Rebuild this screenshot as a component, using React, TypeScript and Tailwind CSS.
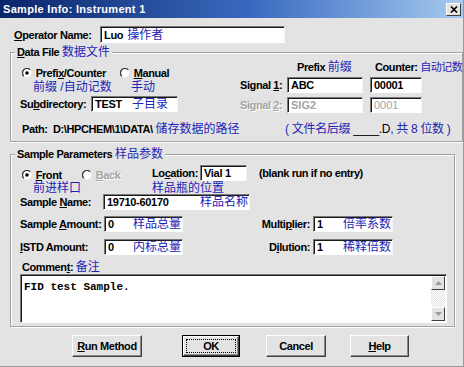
import React from 'react';

// Win2000-style "Sample Info" dialog with Chinese annotations

const lbl = "text-[11px] font-bold tracking-[-0.4px] leading-[12px] text-black whitespace-nowrap";
const dim = "text-[11px] font-bold tracking-[-0.4px] leading-[12px] text-[#a4a4a4] [text-shadow:1px_1px_0_#fff] whitespace-nowrap";
const zh = "text-[12px] leading-[12px] text-[#2424b4] whitespace-nowrap";
const field =
    "bg-white border border-t-[#7a7a7a] border-l-[#7a7a7a] border-b-white border-r-[#f4f4f4] shadow-[inset_1px_1px_0_#1a1a1a] flex items-center pl-[3px] pr-[1px] overflow-hidden";
const val = "text-[11px] font-bold tracking-[-0.3px] leading-[12px] text-black whitespace-nowrap";

const Radio: React.FC<{ checked?: boolean }> = ({ checked }) => (
    <svg width="10" height="10" viewBox="0 0 10 10" className="shrink-0">
        <circle cx="5" cy="5" r="4.4" fill="#fff" />
        <path d="M1.8 8.2 A4.5 4.5 0 0 1 8.2 1.8" stroke="#3a3a3a" strokeWidth="1.3" fill="none" />
        {checked && <circle cx="5" cy="5" r="1.8" fill="#000" />}
    </svg>
);

const U: React.FC<{ children: React.ReactNode }> = ({ children }) => <span className="underline underline-offset-1">{children}</span>;

const Button: React.FC<{ w: string; children: React.ReactNode; focus?: boolean }> = ({ w, children, focus }) => (
    <div className={`${w} h-[22px] ${focus ? 'border border-black' : ''}`}>
        <div className="h-full border border-t-white border-l-white border-b-[#404040] border-r-[#404040] shadow-[inset_-1px_-1px_0_#8a8a8a] flex items-center justify-center p-[2px]">
            <div className={`w-full h-full flex items-center justify-center ${focus ? 'border border-dotted border-black' : ''}`}>
                <span className={lbl}>{children}</span>
            </div>
        </div>
    </div>
);

const Fieldset: React.FC<{ legend: React.ReactNode; className?: string; children: React.ReactNode }> = ({ legend, className, children }) => (
    <fieldset className={`ml-[10px] w-[445px] border border-[#a2a2a2] shadow-[inset_1px_1px_0_#fff,1px_1px_0_#fff] ${className ?? ''}`}>
        <legend className="ml-[4px] px-[2px] bg-[#e3e3e3] leading-[14px] flex items-center">{legend}</legend>
        {children}
    </fieldset>
);

export default function App() {
    return (
        <div className="w-[464px] h-[367px] overflow-hidden bg-[#e3e3e3] font-['Liberation_Sans','Noto_Sans_CJK_SC',sans-serif] border-r border-b border-r-[#9a9a9a] border-b-[#9a9a9a]">
            {/* Title bar */}
            <div className="h-[18px] flex items-center justify-between pl-[3px] pr-[2px] bg-[linear-gradient(to_right,#0a246a,#3a6bc0_55%,#a6caf0)]">
                <span className="text-white text-[11px] font-bold tracking-[0.3px] leading-[12px]">Sample Info: Instrument 1</span>
                <div className="w-[15px] h-[13px] bg-[#e3e3e3] border border-t-white border-l-white border-b-[#404040] border-r-[#404040] flex items-center justify-center">
                    <svg width="8" height="7" viewBox="0 0 8 7">
                        <path d="M1 0.5 L7 6.5 M7 0.5 L1 6.5" stroke="#000" strokeWidth="1.6" />
                    </svg>
                </div>
            </div>

            {/* Operator */}
            <div className="mt-[8px] flex items-center">
                <span className={`${lbl} pl-[14px] w-[100px]`}><U>O</U>perator Name:</span>
                <div className={`${field} w-[185px] h-[17px] gap-[4px]`}>
                    <span className={val}>Luo</span>
                    <span className={zh}>操作者</span>
                </div>
            </div>

            {/* Data File */}
            <Fieldset
                legend={<><span className={lbl}><U>D</U>ata File&nbsp;</span><span className={zh}>数据文件</span></>}
                className="mt-[3px] pb-[5px]"
            >
                <div className="flex items-start">
                    <div className="w-[225px] mt-[9px]">
                        <div className="flex pl-[11px]">
                            <div className="w-[98px] flex flex-col">
                                <div className="flex items-center gap-[1px]">
                                    <Radio checked />
                                    <span className={lbl}>&nbsp;Prefi<U>x</U>/Counter</span>
                                </div>
                                <span className={`${zh} pl-[11px] pt-[2px]`}>前缀 /自动记数</span>
                            </div>
                            <div className="flex flex-col">
                                <div className="flex items-center gap-[1px]">
                                    <Radio />
                                    <span className={lbl}>&nbsp;<U>M</U>anual</span>
                                </div>
                                <span className={`${zh} pl-[11px] pt-[2px]`}>手动</span>
                            </div>
                        </div>
                        <div className="mt-[3px] flex items-center">
                            <span className={`${lbl} pl-[9px] w-[80px]`}>Su<U>b</U>directory:</span>
                            <div className={`${field} w-[87px] h-[16px] gap-[10px]`}>
                                <span className={val}>TEST</span>
                                <span className={zh}>子目录</span>
                            </div>
                        </div>
                    </div>

                    <div className="mt-[2px] flex flex-col">
                        <div className="flex items-center pl-[61px] h-[13px]">
                            <div className="w-[78px] flex items-center">
                                <span className={lbl}>Prefix&nbsp;</span>
                                <span className={zh}>前缀</span>
                            </div>
                            <span className={lbl}>Counter:&nbsp;</span>
                            <span className="text-[11px] leading-[12px] text-[#2424b4] whitespace-nowrap tracking-[-0.5px]">自动记数</span>
                        </div>
                        <div className="mt-[4px] flex items-center">
                            <span className={`${lbl} w-[51px] pl-[4px]`}>Signal <U>1</U>:</span>
                            <div className={`${field} w-[76px] h-[16px]`}>
                                <span className={val}>ABC</span>
                            </div>
                            <div className={`${field} ml-[7px] w-[52px] h-[16px]`}>
                                <span className={val}>00001</span>
                            </div>
                        </div>
                        <div className="mt-[4px] flex items-center">
                            <span className={`${dim} w-[51px] pl-[4px]`}>Signal <U>2</U>:</span>
                            <div className={`${field} w-[76px] h-[16px]`}>
                                <span className="text-[11px] font-bold leading-[12px] text-[#a4a4a4]">SIG2</span>
                            </div>
                            <div className={`${field} ml-[7px] w-[52px] h-[16px]`}>
                                <span className="text-[11px] leading-[12px] text-[#a4a4a4]">0001</span>
                            </div>
                        </div>
                    </div>
                </div>

                <div className="mt-[9px] flex items-center h-[14px]">
                    <div className="w-[274px] pl-[11px] flex items-center">
                        <span className={`${lbl} w-[31px]`}>Path:</span>
                        <span className={lbl}>D:\HPCHEM\1\DATA\&nbsp;</span>
                        <span className={zh}>储存数据的路径</span>
                    </div>
                    <span className="text-[12px] leading-[12px] text-[#2424b4] whitespace-nowrap tracking-[-0.3px]">( 文件名后缀 <span className="text-black">____.D</span>, 共 8 位数 )</span>
                </div>
            </Fieldset>

            {/* Sample Parameters */}
            <Fieldset
                legend={<><span className={lbl}>Sample Parameters&nbsp;</span><span className={zh}>样品参数</span></>}
                className="mt-[6px] pb-[3px]"
            >
                <div className="mt-[5px] flex items-start">
                    <div className="ml-[11px] w-[130px] mt-[4px] flex">
                        <div className="w-[60px] flex flex-col">
                            <div className="flex items-center gap-[1px]">
                                <Radio checked />
                                <span className={lbl}>&nbsp;<U>F</U>ront</span>
                            </div>
                            <span className={`${zh} pl-[11px] pt-[1px]`}>前进样口</span>
                        </div>
                        <div className="flex items-center gap-[1px] h-[12px]">
                            <Radio />
                            <span className={dim}>&nbsp;<U>B</U>ack</span>
                        </div>
                    </div>
                    <div className="flex flex-col">
                        <div className="flex items-center h-[16px]">
                            <span className={`${lbl} w-[48px]`}>Lo<U>c</U>ation:</span>
                            <div className={`${field} w-[47px] h-[16px]`}>
                                <span className={val}>Vial 1</span>
                            </div>
                            <span className={`${lbl} ml-[12px] font-semibold`}>(blank run if no entry)</span>
                        </div>
                        <span className={`${zh} pt-[1px]`}>样品瓶的位置</span>
                    </div>
                </div>

                <div className="flex items-center h-[16px]">
                    <span className={`${lbl} pl-[9px] w-[92px]`}>Sample <U>N</U>ame:</span>
                    <div className={`${field} w-[147px] h-[16px] justify-between`}>
                        <span className={val}>19710-60170</span>
                        <span className={zh}>样品名称</span>
                    </div>
                </div>

                <div className="mt-[6px] flex items-center h-[16px]">
                    <span className={`${lbl} pl-[9px] w-[93px]`}>Sample <U>A</U>mount:</span>
                    <div className={`${field} w-[79px] h-[16px] justify-between`}>
                        <span className={val}>0</span>
                        <span className={zh}>样品总量</span>
                    </div>
                    <span className={`${lbl} w-[130px] text-right pr-[3px]`}>Multi<U>p</U>lier:</span>
                    <div className={`${field} w-[80px] h-[16px] justify-between`}>
                        <span className={val}>1</span>
                        <span className={zh}>倍率系数</span>
                    </div>
                </div>

                <div className="mt-[7px] flex items-center h-[16px]">
                    <span className={`${lbl} pl-[9px] w-[93px]`}><U>I</U>STD Amount:</span>
                    <div className={`${field} w-[79px] h-[16px] justify-between`}>
                        <span className={val}>0</span>
                        <span className={zh}>内标总量</span>
                    </div>
                    <span className={`${lbl} w-[130px] text-right pr-[3px]`}>D<U>i</U>lution:</span>
                    <div className={`${field} w-[80px] h-[16px] justify-between`}>
                        <span className={val}>1</span>
                        <span className={zh}>稀释倍数</span>
                    </div>
                </div>

                <div className="mt-[6px] pl-[11px] flex items-center h-[12px]">
                    <span className={lbl}>Commen<U>t</U>:&nbsp;</span>
                    <span className={zh}>备注</span>
                </div>

                <div className="mt-[1px] ml-[9px] w-[427px] h-[49px] bg-white border border-t-[#7a7a7a] border-l-[#7a7a7a] border-b-white border-r-white shadow-[inset_1px_1px_0_#1a1a1a] flex">
                    <div className="flex-1 pl-[3px] pt-[3px] leading-[13px]">
                        <span className="font-['Liberation_Mono',monospace] text-[11px] font-bold leading-[13px] text-black">FID test Sample.</span>
                    </div>
                    <div className="w-[14px] mt-[1px] mb-[1px] mr-[1px] flex flex-col bg-[repeating-conic-gradient(#e3e3e3_0_25%,#ffffff_0_50%)] bg-[length:2px_2px]">
                        <div className="h-[14px] bg-[#e3e3e3] border border-t-white border-l-white border-b-[#404040] border-r-[#404040] flex items-center justify-center">
                            <svg width="7" height="4" viewBox="0 0 7 4"><path d="M3.5 0 L7 4 L0 4 Z" fill="#9a9a9a" /></svg>
                        </div>
                        <div className="flex-1" />
                        <div className="h-[14px] bg-[#e3e3e3] border border-t-white border-l-white border-b-[#404040] border-r-[#404040] flex items-center justify-center">
                            <svg width="7" height="4" viewBox="0 0 7 4"><path d="M0 0 L7 0 L3.5 4 Z" fill="#9a9a9a" /></svg>
                        </div>
                    </div>
                </div>
            </Fieldset>

            {/* Buttons */}
            <div className="mt-[8px] pl-[72px] flex items-center">
                <Button w="w-[70px]"><U>R</U>un Method</Button>
                <div className="ml-[40px]"><Button w="w-[58px]" focus>OK</Button></div>
                <div className="ml-[26px]"><Button w="w-[60px]">Cancel</Button></div>
                <div className="ml-[24px]"><Button w="w-[59px]"><U>H</U>elp</Button></div>
            </div>
        </div>
    );
}
